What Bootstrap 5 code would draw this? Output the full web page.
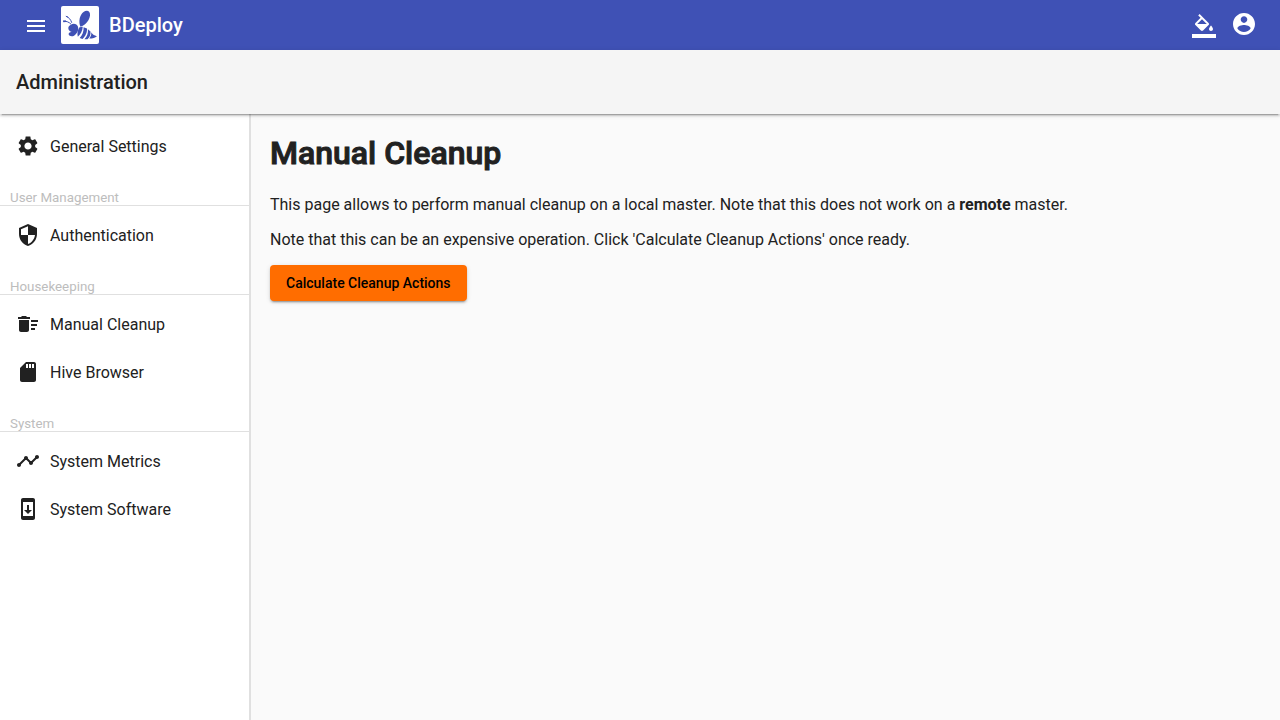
<!DOCTYPE html>
<html lang="en">
<head>
<meta charset="utf-8">
<meta name="viewport" content="width=device-width, initial-scale=1">
<title>BDeploy</title>
<link href="https://cdn.jsdelivr.net/npm/bootstrap@5.3.0/dist/css/bootstrap.min.css" rel="stylesheet">
<style>
body { font-family: Roboto, "Liberation Sans", sans-serif; font-size: 16px; color: #212121; background: #fafafa; }
svg { display: block; fill: currentColor; flex-shrink: 0; }
.app-bar { background: #3f51b5; height: 50px; padding: 0 24px; }
.app-bar .btn { padding: 0; border: 0; color: #fff; }
.app-bar .btn-low { padding-top: 2px; }
.app-bar .account { padding-bottom: 2px; }
.brand-link { margin-left: 13px; gap: 10px; }
.brand-text { font-size: 20px; font-weight: 500; line-height: 24px; }
.logo-tile { width: 38px; height: 38px; background: #fff; border-radius: 2px; color: #3f51b5; }
.title-bar { background: #f5f5f5; height: 64px; z-index: 2; }
.title-bar h1 { font-size: 20px; font-weight: 500; line-height: 32px; }
.title-bar, .btn-accent { box-shadow: 0 3px 1px -2px rgba(0,0,0,.2), 0 2px 2px 0 rgba(0,0,0,.14), 0 1px 5px 0 rgba(0,0,0,.12); }
.side-nav { width: 250px; background: #fff; border-right: 1px solid #e0e0e0; box-shadow: 1px 0 0 #e0e0e0; }
.side-nav .nav-link { height: 48px; padding: 0 16px; gap: 10px; color: #212121; line-height: 24px; }
.side-nav .nav-link span { padding-top: 2px; }
.section-label { margin: 0 0 5px; padding: 20px 10px 0; font-size: smaller; font-weight: 400; line-height: 15px; color: #bdbdbd; border-bottom: 1px solid #e0e0e0; }
.content-area { padding: 20px; }
.content-area h2 { font-size: 32px; font-weight: 500; line-height: 39px; margin-bottom: 22px; -webkit-text-stroke: 1px currentColor; }
.content-area p { line-height: 19px; margin-bottom: 16px; }
.content-area strong { font-weight: 700; }
.btn-accent { --bs-btn-bg: #ff6d00; --bs-btn-color: #000; --bs-btn-hover-bg: #e66200; --bs-btn-hover-color: #000; --bs-btn-active-bg: #e66200; height: 36px; padding: 0 16px; border: 0; border-radius: 4px; font-size: 14px; font-weight: 500; line-height: 36px; }
</style>
</head>
<body class="d-flex flex-column min-vh-100">
<header class="app-bar d-flex align-items-center text-white">
  <button type="button" class="btn btn-low" aria-label="Menu">
    <svg width="24" height="24" viewBox="0 0 24 24"><path d="M3 18h18v-2H3v2zm0-5h18v-2H3v2zm0-7v2h18V6H3z"/></svg>
  </button>
  <a href="#" class="brand-link d-flex align-items-center text-white text-decoration-none">
    <span class="logo-tile">
      <svg width="38" height="38" viewBox="0 0 38 38">
        <path d="M19.500 20.800C17.200 16 18.500 9 22.500 6C26 3.500 29.500 5 29 9.500C28.500 14 24.500 19.500 19.500 20.800Z"/>
        <path d="M2.300 15.300C5 14.900 8 16 10 18.200M5 10.300C7.500 11 9.800 13.500 10.800 16.800" fill="none" stroke="currentColor" stroke-width="1"/>
        <path d="M2 14.600l3 0 0 1.400-2.600.2zM4.300 9.800l2.200.5 .5 1.700z"/>
        <path d="M9.500 19C12 17 16 17.600 17 20.800C18 24.500 15.800 28 13 29.700C11 30.800 8 30.300 7.600 28.300C7.400 27 8.800 25.800 10.800 26C9 25.600 7 24 7.300 21.800C7.600 20.300 8.500 19.500 9.500 19Z"/>
        <path d="M18.500 21.300L21.800 20.800C21.500 25 19.500 28.300 16.800 30.700C16 27.500 16.600 24 18.500 21.300Z"/>
        <path d="M22.600 21.200L26 22.500C26.300 26.500 24.300 30.500 21.500 33L18.700 32C21.300 29 22.900 25.500 22.600 21.200Z"/>
        <path d="M26.900 23.300L29.500 25.500C29.900 28.800 28.500 31.600 26.500 33.200L23.400 33.200C26.300 30.500 27.300 27 26.900 23.300Z"/>
        <path d="M30.200 26.300C31.200 28.300 33.200 29.500 36 30.200C34 31.400 32 32.600 28.300 32.600C29.800 30.700 30.600 28.500 30.200 26.300Z"/>
      </svg>
    </span>
    <span class="brand-text">BDeploy</span>
  </a>
  <div class="d-flex align-items-center gap-3 ms-auto">
    <button type="button" class="btn btn-low" aria-label="Change theme">
      <svg width="24" height="24" viewBox="0 0 24 24"><path d="M16.560 8.940L7.620 0 6.210 1.410l2.380 2.380-5.150 5.150c-.59.59-.59 1.540 0 2.120l5.500 5.500c.29.29.68.44 1.060.44s.77-.15 1.060-.44l5.500-5.500c.59-.58.59-1.530 0-2.120zM5.210 10L10 5.210 14.790 10H5.210zM19 11.500s-2 2.170-2 3.500c0 1.100.9 2 2 2s2-.9 2-2c0-1.330-2-3.500-2-3.500zM0 20h24v4H0z"/></svg>
    </button>
    <button type="button" class="btn account" aria-label="Account">
      <svg width="24" height="24" viewBox="0 0 24 24"><path transform="translate(12 12) scale(1.1) translate(-12 -12)" d="M12 2C6.480 2 2 6.480 2 12s4.480 10 10 10 10-4.480 10-10S17.520 2 12 2zm0 3c1.660 0 3 1.340 3 3s-1.340 3-3 3-3-1.340-3-3 1.340-3 3-3zm0 14.200c-2.500 0-4.710-1.280-6-3.220.03-1.990 4-3.080 6-3.080 1.990 0 5.970 1.090 6 3.080-1.290 1.940-3.500 3.220-6 3.220z"/></svg>
    </button>
  </div>
</header>
<div class="title-bar d-flex align-items-center px-3 position-relative">
  <h1 class="m-0">Administration</h1>
</div>
<div class="d-flex flex-grow-1">
  <nav class="side-nav nav flex-column flex-nowrap flex-shrink-0 pt-2" aria-label="Administration">
    <a class="nav-link d-flex align-items-center" href="#">
      <svg width="24" height="24" viewBox="0 0 24 24"><path d="M19.140 12.940c.04-.3.06-.61.06-.94 0-.32-.02-.64-.07-.94l2.030-1.580c.18-.14.23-.41.12-.61l-1.920-3.320c-.12-.22-.37-.29-.59-.22l-2.390.96c-.5-.38-1.030-.7-1.620-.94l-.36-2.540c-.04-.24-.24-.41-.48-.41h-3.840c-.24 0-.43.17-.47.41l-.36 2.540c-.59.24-1.130.57-1.620.94l-2.390-.96c-.22-.08-.47 0-.59.22L2.740 8.870c-.12.21-.08.47.12.61l2.030 1.580c-.05.3-.09.63-.09.94s.02.64.07.94l-2.030 1.580c-.18.14-.23.41-.12.61l1.920 3.320c.12.22.37.29.59.22l2.390-.96c.5.38 1.030.7 1.620.94l.36 2.540c.05.24.24.41.48.41h3.840c.24 0 .44-.17.47-.41l.36-2.540c.59-.24 1.130-.56 1.620-.94l2.390.96c.22.08.47 0 .59-.22l1.920-3.320c.12-.22.07-.47-.12-.61l-2.010-1.580zM12 15.600c-1.980 0-3.600-1.620-3.600-3.600s1.620-3.600 3.600-3.600 3.600 1.620 3.600 3.600-1.620 3.600-3.600 3.600z"/></svg>
      <span>General Settings</span>
    </a>
    <h3 class="section-label">User Management</h3>
    <a class="nav-link d-flex align-items-center" href="#">
      <svg width="24" height="24" viewBox="0 0 24 24"><path d="M12 1L3 5v6c0 5.550 3.840 10.740 9 12 5.160-1.260 9-6.450 9-12V5l-9-4zm0 10.990h7c-.53 4.120-3.280 7.790-7 8.940V12H5V6.300l7-3.110v8.800z"/></svg>
      <span>Authentication</span>
    </a>
    <h3 class="section-label">Housekeeping</h3>
    <a class="nav-link d-flex align-items-center" href="#" aria-current="page">
      <svg width="24" height="24" viewBox="0 0 24 24"><path d="M15 16h4v2h-4zm0-8h7v2h-7zm0 4h6v2h-6zM3 18c0 1.100.9 2 2 2h6c1.100 0 2-.9 2-2V8H3v10zM14 5h-3l-1-1H6L5 5H2v2h12z"/></svg>
      <span>Manual Cleanup</span>
    </a>
    <a class="nav-link d-flex align-items-center" href="#">
      <svg width="24" height="24" viewBox="0 0 24 24"><path d="M18 2h-8L4.020 8 4 20c0 1.100.9 2 2 2h12c1.100 0 2-.9 2-2V4c0-1.100-.9-2-2-2zm-6 6h-2V4h2v4zm3 0h-2V4h2v4zm3 0h-2V4h2v4z"/></svg>
      <span>Hive Browser</span>
    </a>
    <h3 class="section-label">System</h3>
    <a class="nav-link d-flex align-items-center" href="#">
      <svg width="24" height="24" viewBox="0 0 24 24"><path d="M23 8c0 1.100-.9 2-2 2-.18 0-.35-.02-.51-.07l-3.560 3.550c.05.16.07.34.07.52 0 1.100-.9 2-2 2s-2-.9-2-2c0-.18.02-.36.07-.52l-2.550-2.550c-.16.05-.34.07-.52.07s-.36-.02-.52-.07l-4.550 4.560c.05.16.07.33.07.51 0 1.100-.9 2-2 2s-2-.9-2-2 .9-2 2-2c.18 0 .35.02.51.07l4.560-4.550C8.020 9.360 8 9.180 8 9c0-1.100.9-2 2-2s2 .9 2 2c0 .18-.02.36-.07.52l2.550 2.550c.16-.05.34-.07.52-.07s.36.02.52.07l3.550-3.560C19.020 8.350 19 8.180 19 8c0-1.100.9-2 2-2s2 .9 2 2z"/></svg>
      <span>System Metrics</span>
    </a>
    <a class="nav-link d-flex align-items-center" href="#">
      <svg width="24" height="24" viewBox="0 0 24 24"><path d="M17 1.010L7 1c-1.100 0-2 .9-2 2v18c0 1.100.9 2 2 2h10c1.100 0 2-.9 2-2V3c0-1.100-.9-1.990-2-1.990zM17 19H7V5h10v14zm-1-6h-3V8h-2v5H8l4 4 4-4z"/></svg>
      <span>System Software</span>
    </a>
  </nav>
  <main class="content-area flex-grow-1">
    <h2>Manual Cleanup</h2>
    <p>This page allows to perform manual cleanup on a local master. Note that this does not work on a <strong>remote</strong> master.</p>
    <p>Note that this can be an expensive operation. Click 'Calculate Cleanup Actions' once ready.</p>
    <button type="button" class="btn btn-accent">Calculate Cleanup Actions</button>
  </main>
</div>
<script src="https://cdn.jsdelivr.net/npm/bootstrap@5.3.0/dist/js/bootstrap.bundle.min.js"></script>
</body>
</html>
